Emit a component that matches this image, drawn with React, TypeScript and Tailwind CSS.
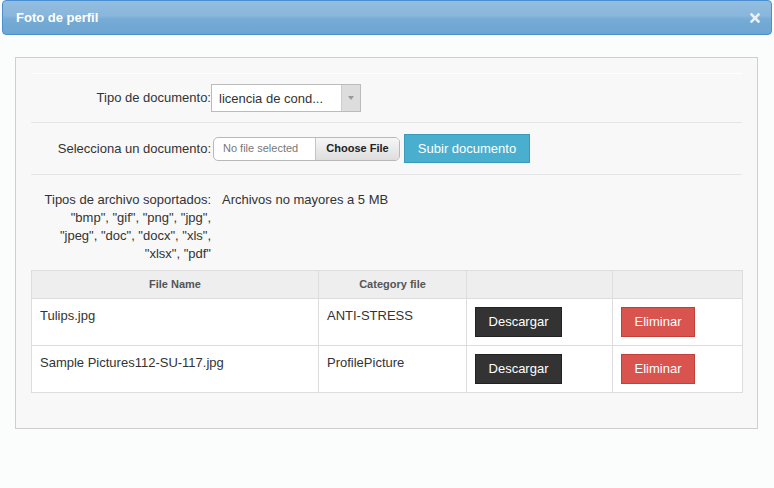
import React from "react";

const font = { fontFamily: '"Liberation Sans", Arial, sans-serif' };

export default function App() {
  const rows = [
    { name: "Tulips.jpg", cat: "ANTI-STRESS" },
    { name: "Sample Pictures112-SU-117.jpg", cat: "ProfilePicture" },
  ];
  return (
    <div className="w-[774px] h-[488px] bg-[#fbfcfc] text-[13px] text-[#333] overflow-hidden" style={font}>
      {/* Title bar */}
      <div className="ml-[2px] w-[770px] h-[35px] rounded-[4px] border border-[#4a8fd0] bg-[linear-gradient(to_bottom,#92bde0_0%,#89b6db_45%,#75abd5_55%,#6ea6d2_100%)] flex items-center justify-between pl-[13px] pr-[11px]">
        <span className="text-white font-bold text-[13px] leading-none">Foto de perfil</span>
        <svg width="10" height="10" viewBox="0 0 10 10" className="mt-[1px]">
          <path d="M1.5 1.5 L8.5 8.5 M8.5 1.5 L1.5 8.5" stroke="#e8eff7" strokeWidth="2.6" strokeLinecap="square" />
        </svg>
      </div>

      {/* Panel */}
      <div className="mt-[22px] ml-[15px] w-[743px] h-[372px] border border-[#cfcfcf] bg-[#f8f8f8] px-[15px] pt-[15px]">
        <div className="border-t border-white" />
        {/* Row 1 */}
        <div className="flex items-center py-[10px] border-b border-[#e6e6e6]">
          <div className="w-[180px] text-right leading-[18px]">Tipo de documento:</div>
          <div className="flex h-[28px] w-[150px] border border-[#bbbbbb] bg-white">
            <div className="flex-1 pl-[7px] flex items-center leading-none">licencia de cond...</div>
            <div className="w-[19px] bg-[#dddddd] border-l border-[#cccccc] flex items-center justify-center">
              <svg width="6" height="4" viewBox="0 0 6 4"><path d="M0 0 H6 L3 4 Z" fill="#999" /></svg>
            </div>
          </div>
        </div>
        {/* Row 2 */}
        <div className="flex items-center py-[11px] border-b border-[#e6e6e6]">
          <div className="w-[180px] text-right leading-[18px]">Selecciona un documento:</div>
          <div className="ml-[2px] flex h-[24px] w-[187px] border border-[#b9b9b9] rounded-[5px] overflow-hidden bg-white text-[11px]">
            <div className="w-[101px] pl-[9px] flex items-center text-[#777]">No file selected</div>
            <div className="flex-1 border-l border-[#c4c4c4] bg-[linear-gradient(to_bottom,#f6f6f6,#dedede)] flex items-center justify-center font-bold text-[#222]">Choose File</div>
          </div>
          <div className="ml-[4px] h-[29px] w-[126px] bg-[#4aafcf] border border-[#3a9ab9] flex items-center justify-center text-white text-[13px]">Subir documento</div>
        </div>
        {/* Row 3 */}
        <div className="flex pt-[16px] leading-[18px]">
          <div className="w-[180px] text-right">
            Tipos de archivo soportados:
            <br />
            "bmp", "gif", "png", "jpg",
            <br />
            "jpeg", "doc", "docx", "xls",
            <br />
            "xlsx", "pdf"
          </div>
          <div className="ml-[11px]">Archivos no mayores a 5 MB</div>
        </div>
        {/* Table */}
        <table className="mt-[7px] w-[711px] table-fixed border-collapse bg-white">
          <colgroup>
            <col className="w-[287px]" />
            <col className="w-[148px]" />
            <col className="w-[146px]" />
            <col className="w-[130px]" />
          </colgroup>
          <thead>
            <tr className="h-[28px] bg-[#eeeeee] text-[11px] font-bold text-[#555]">
              <th className="border border-[#dddddd] font-bold p-0">File Name</th>
              <th className="border border-[#dddddd] font-bold p-0">Category file</th>
              <th className="border border-[#dddddd] p-0"></th>
              <th className="border border-[#dddddd] p-0"></th>
            </tr>
          </thead>
          <tbody>
            {rows.map((r) => (
              <tr key={r.name}>
                <td className="border border-[#dddddd] align-top px-[8px] pt-[8px] leading-[18px]">{r.name}</td>
                <td className="border border-[#dddddd] align-top px-[8px] pt-[8px] leading-[18px]">{r.cat}</td>
                <td className="border border-[#dddddd] align-top p-[8px]">
                  <div className="h-[30px] w-[87px] bg-[#333333] border border-[#222] text-white flex items-center justify-center">Descargar</div>
                </td>
                <td className="border border-[#dddddd] align-top p-[8px]">
                  <div className="h-[30px] w-[74px] bg-[#d9534f] border border-[#c33f3b] text-white flex items-center justify-center">Eliminar</div>
                </td>
              </tr>
            ))}
          </tbody>
        </table>
      </div>
    </div>
  );
}
